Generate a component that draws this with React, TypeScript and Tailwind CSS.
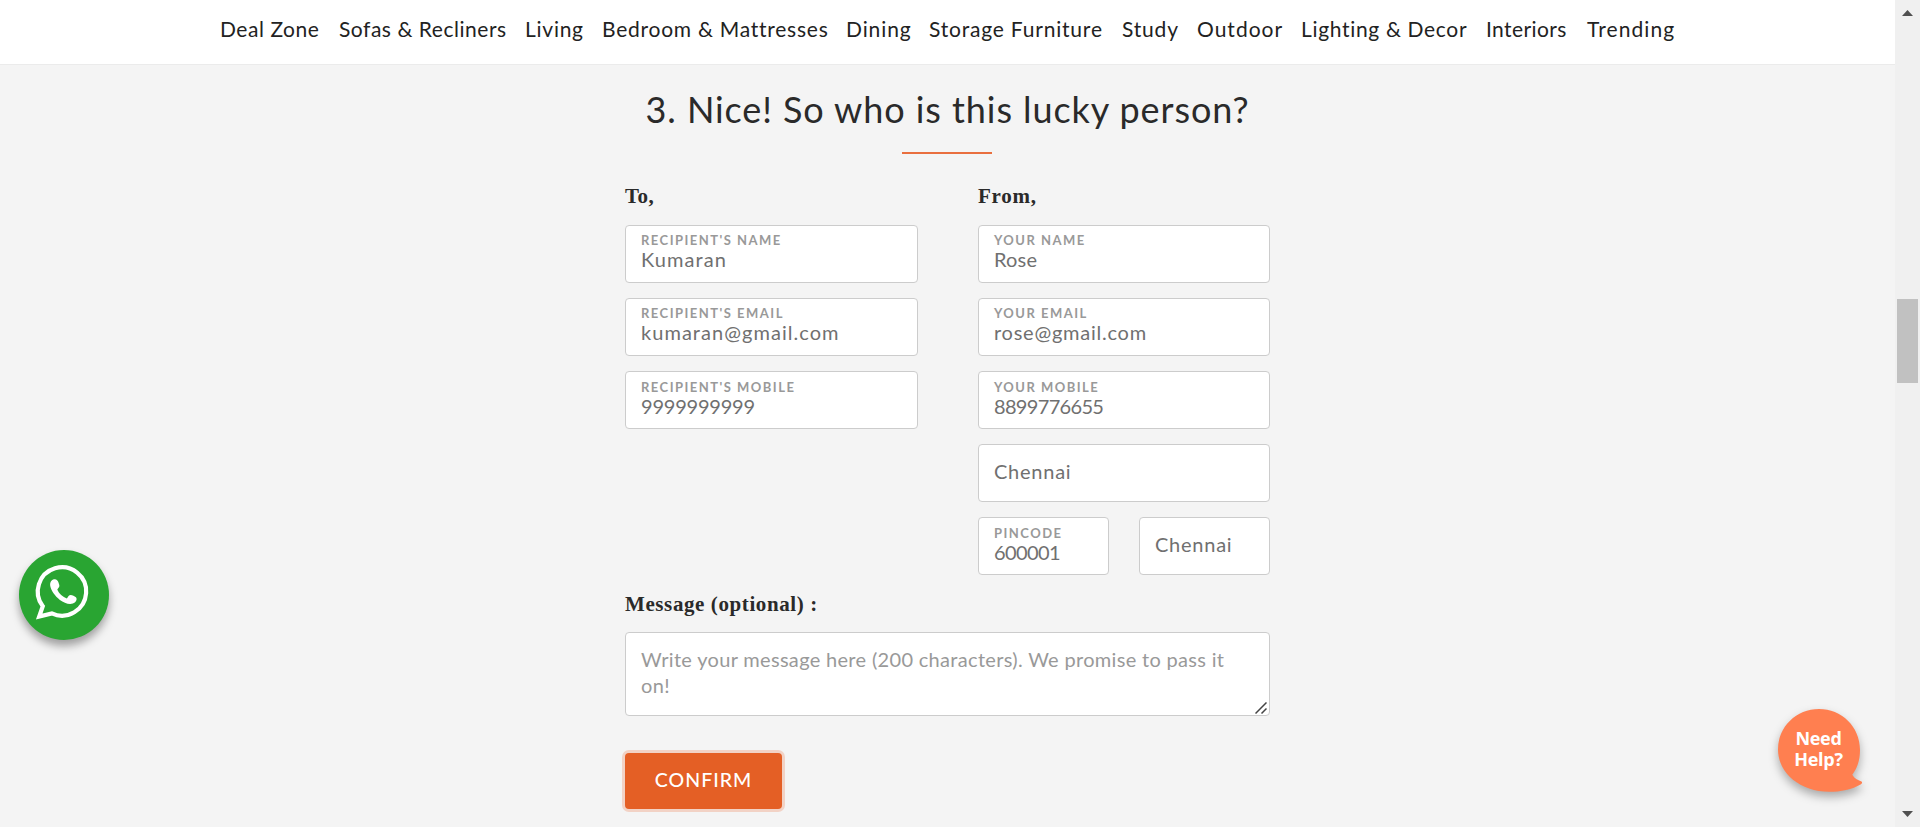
const navItems = [
  { label: "Deal Zone", cls: "w-[119px] tracking-[0.55px]" },
  { label: "Sofas & Recliners", cls: "w-[186px] tracking-[0.53px]" },
  { label: "Living", cls: "w-[77px] tracking-[0.74px]" },
  { label: "Bedroom & Mattresses", cls: "w-[244px] tracking-[0.75px]" },
  { label: "Dining", cls: "w-[83px] tracking-[0.9px]" },
  { label: "Storage Furniture", cls: "w-[193px] tracking-[0.8px]" },
  { label: "Study", cls: "w-[75px] tracking-[0.82px]" },
  { label: "Outdoor", cls: "w-[104px] tracking-[1px]" },
  { label: "Lighting & Decor", cls: "w-[185px] tracking-[0.67px]" },
  { label: "Interiors", cls: "w-[101px] tracking-[0.4px]" },
  { label: "Trending", cls: "w-[90px] tracking-[1.1px]" },
];

type FieldProps = {
  label?: string;
  value: string;
  tracking: string;
  pad?: string;
};

function Field({ label, value, tracking, pad = "pt-[6px]" }: FieldProps) {
  return (
    <div
      className={`flex h-[58px] flex-col rounded border border-[#ccc] bg-white px-[15px] ${
        label ? pad : "justify-center pb-[4px]"
      }`}
    >
      {label && (
        <span className="text-[13px] leading-[16px] font-bold tracking-[1.48px] whitespace-nowrap text-[#999] uppercase">
          {label}
        </span>
      )}
      <span
        className={`text-[20px] leading-[24px] whitespace-nowrap text-[#707070] ${tracking} ${
          label ? "-mt-px" : ""
        }`}
      >
        {value}
      </span>
    </div>
  );
}

function SectionLabel({ children, className = "" }: { children: string; className?: string }) {
  return (
    <h3
      className={`h-[24px] font-['Liberation_Serif',serif] text-[21px] leading-[24px] font-bold whitespace-nowrap text-[#2a2a2a] ${className}`}
    >
      {children}
    </h3>
  );
}

function Scrollbar() {
  return (
    <div className="flex w-[25px] shrink-0 flex-col items-center bg-[#f0f0f0]">
      <svg className="mt-[10px] block shrink-0" width="11" height="6" viewBox="0 0 11 6">
        <path d="M5.5 0L11 6H0Z" fill="#505050" />
      </svg>
      <div className="mt-[283px] h-[84px] w-[21px] shrink-0 bg-[#c1c1c1]" />
      <svg className="mt-auto mb-[10px] block shrink-0" width="11" height="6" viewBox="0 0 11 6">
        <path d="M0 0H11L5.5 6Z" fill="#505050" />
      </svg>
    </div>
  );
}

function WhatsAppButton() {
  return (
    <button className="absolute top-[550px] left-[19px] h-[90px] w-[90px] rounded-full bg-[#29a532] shadow-[0_6px_9px_rgba(0,0,0,0.35)]">
      <svg className="block" width="90" height="90" viewBox="-1.3 0.3 90 90" fill="none">
        <path
          d="M22.5 56.5A24.2 24.2 0 1 1 31.5 63.7L18.9 66.8Z"
          stroke="#fff"
          strokeWidth="4.2"
          strokeLinejoin="miter"
        />
        <path
          d="M33.5 29.6C36 29 37.4 30.6 38 32.4L39 35.4C39.5 37 38.2 38.4 37 39.8C38.6 44 42.6 47.4 46.6 48.7C47.8 47 48.6 45.4 50.4 45.3C52 45.4 54.4 46.4 55.6 47.6C57.4 49.6 55.4 53 52.6 53.8C48.4 55 43.6 53.2 39.6 50.2C34.6 46.4 30.4 40.8 29.8 35.4C29.6 32.4 31.2 30 33.5 29.6Z"
          fill="#fff"
        />
      </svg>
    </button>
  );
}

function NeedHelp() {
  return (
    <button className="absolute top-[700px] left-[1768px] h-[104px] w-[104px]">
      <svg
        className="absolute inset-0 block overflow-visible drop-shadow-[0_5px_5px_rgba(0,0,0,0.3)]"
        width="104"
        height="104"
        viewBox="0 0 104 104"
      >
        <path
          d="M51 9C73.500 9 92 26.500 92 50C92 60.500 89 68.500 84.300 74.800C86.500 78.500 89.500 80 93.500 81.500C94.500 82.500 94 83.500 93 84.200C84 89.500 73 91.800 61 91.800C33 91.800 10 73.500 10 49.500C10 26.500 28.500 9 51 9Z"
          fill="#ff7f50"
        />
      </svg>
      <span className="relative -mt-[6px] block pr-[3px] text-center font-['Open_Sans',sans-serif] text-[18px] leading-[21px] font-bold tracking-[-0.3px] text-white">
        Need
        <br />
        Help?
      </span>
    </button>
  );
}

export default function App() {
  return (
    <div className="relative flex h-[827px] w-[1920px] overflow-hidden bg-[#f4f4f4] font-['Lato',sans-serif]">
      <div className="flex w-[1895px] shrink-0 flex-col">
        <nav className="flex h-[65px] shrink-0 border-b border-[#ebebeb] bg-white pt-[15px] pl-[220px] text-[21px] leading-[28px] text-[#222]">
          {navItems.map((item) => (
            <a key={item.label} className={`shrink-0 whitespace-nowrap ${item.cls}`}>
              {item.label}
            </a>
          ))}
        </nav>

        <main className="flex flex-col items-center">
          <h2 className="mt-[24px] text-[36px] leading-[40px] tracking-[0.92px] whitespace-nowrap text-[#2a2a2a]">
            3. Nice! So who is this lucky person?
          </h2>
          <div className="mt-[23px] mr-px h-[2px] w-[90px] bg-[#e96f3e]" />

          <form className="mt-[30px] w-[645px]">
            <div className="grid grid-cols-[293px_292px] gap-x-[60px]">
              <div className="flex flex-col gap-[15px]">
                <SectionLabel className="mb-[2px] tracking-[0.4px]">To,</SectionLabel>
                <Field label="Recipient's name" value="Kumaran" tracking="tracking-[1.08px]" />
                <Field label="Recipient's email" value="kumaran@gmail.com" tracking="tracking-[1.04px]" />
                <Field
                  label="Recipient's mobile"
                  value="9999999999"
                  tracking="tracking-[-0.22px]"
                  pad="pt-[7px]"
                />
              </div>
              <div className="flex flex-col gap-[15px]">
                <SectionLabel className="mb-[2px] tracking-[0.75px]">From,</SectionLabel>
                <Field label="Your name" value="Rose" tracking="tracking-[0.2px]" />
                <Field label="Your email" value="rose@gmail.com" tracking="tracking-[0.75px]" />
                <Field label="Your mobile" value="8899776655" tracking="tracking-[-0.67px]" pad="pt-[7px]" />
                <Field value="Chennai" tracking="tracking-[0.75px]" />
                <div className="grid grid-cols-[131px_131px] gap-x-[30px]">
                  <Field label="Pincode" value="600001" tracking="tracking-[-0.6px]" pad="pt-[7px]" />
                  <Field value="Chennai" tracking="tracking-[0.75px]" />
                </div>
              </div>
            </div>

            <SectionLabel className="mt-[17px] tracking-[0.6px]">Message (optional) :</SectionLabel>
            <div className="relative mt-[16px] h-[84px] rounded border border-[#ccc] bg-white px-[15px] pt-[13px] text-[20px] leading-[26px] tracking-[0.32px] text-[#999]">
              <p className="whitespace-nowrap">
                Write your message here (200 characters). We promise to pass it
                <br />
                on!
              </p>
              <svg className="absolute right-[2px] bottom-[1px]" width="12" height="12" viewBox="0 0 12 12">
                <path d="M0.500 11.500L11.500 0.500M6.500 11.500L11.500 6.500" stroke="#444" strokeWidth="1.500" />
              </svg>
            </div>

            <button
              type="button"
              className="mt-[37px] flex h-[56px] w-[157px] items-center justify-center rounded bg-[#e45f25] pb-[2px] text-[19.500px] leading-[24px] font-medium tracking-[1px] text-white shadow-[0_0_0_3px_#f2d2c5]"
            >
              CONFIRM
            </button>
          </form>
        </main>
      </div>
      <Scrollbar />
      <WhatsAppButton />
      <NeedHelp />
    </div>
  );
}
